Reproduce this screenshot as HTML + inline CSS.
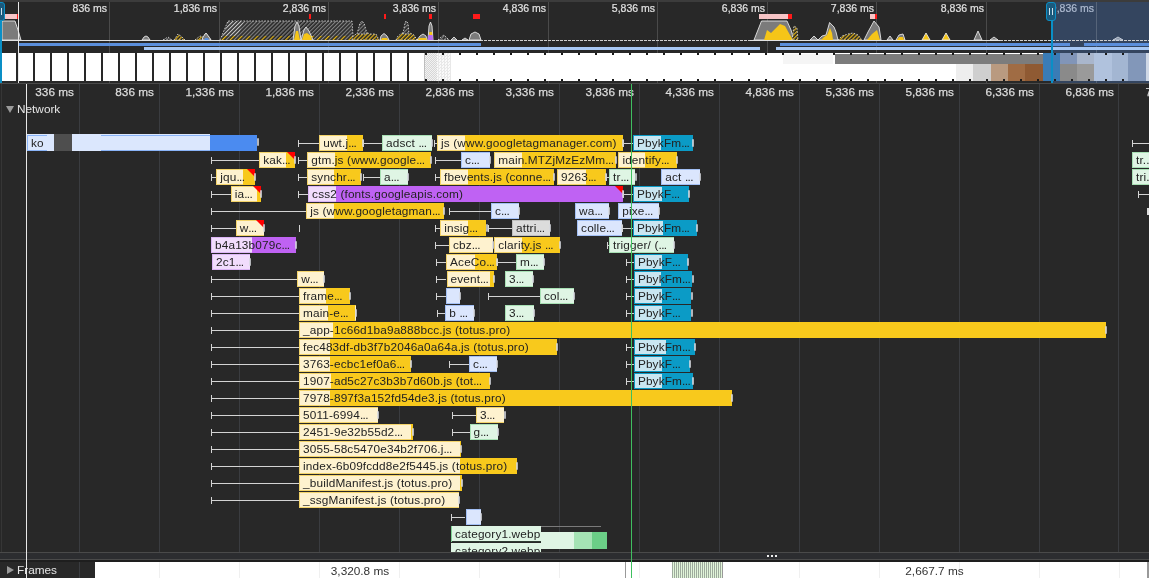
<!DOCTYPE html><html><head><meta charset="utf-8"><style>
*{margin:0;padding:0;box-sizing:border-box}
html,body{width:1149px;height:578px;overflow:hidden;background:#282828;font-family:"Liberation Sans",sans-serif}
#root{will-change:transform;position:relative;width:1149px;height:578px;overflow:hidden;background:#282828}
.abs{position:absolute}
.b{position:absolute;height:16px;overflow:hidden;white-space:nowrap}
.b span{position:absolute;left:4px;top:0;line-height:16px;font-size:11.8px;letter-spacing:0.15px;color:#222}
.dk{position:absolute;top:0;height:16px}
.el{font-style:normal;letter-spacing:-0.6px}
.red{position:absolute;right:0;top:0;width:0;height:0;border-top:8px solid #f00;border-left:8px solid transparent}
.wh{position:absolute;height:1px;background:#d4d4d4}
.wt{position:absolute;width:1px;height:7px;background:#d4d4d4}
.et{position:absolute;width:2px;height:8px;background:rgba(215,218,224,0.8);border-radius:1px}
.gl{position:absolute;width:1px;background:#3a3c40}
.rl{position:absolute;-webkit-text-stroke:0.25px #dcdcdc;font-size:11.8px;color:#dcdcdc;line-height:14px;text-align:right;width:80px}
.ol{position:absolute;-webkit-text-stroke:0.2px currentColor;font-size:10.5px;color:#e2e2e2;line-height:12px;text-align:right;width:80px}
</style></head><body><div id="root">

<div class="abs" style="left:0;top:0;width:1149px;height:2px;background:#3c3c3c"></div>
<div class="abs" style="left:1051px;top:2px;width:98px;height:81px;background:#34455f"></div>
<div class="gl" style="left:109px;top:2px;height:81px;background:#4a4a4a"></div>
<div class="ol" style="left:27px;top:2px;">836 ms</div>
<div class="gl" style="left:219px;top:2px;height:81px;background:#4a4a4a"></div>
<div class="ol" style="left:137px;top:2px;">1,836 ms</div>
<div class="gl" style="left:328px;top:2px;height:81px;background:#4a4a4a"></div>
<div class="ol" style="left:246px;top:2px;">2,836 ms</div>
<div class="gl" style="left:438px;top:2px;height:81px;background:#4a4a4a"></div>
<div class="ol" style="left:356px;top:2px;">3,836 ms</div>
<div class="gl" style="left:548px;top:2px;height:81px;background:#4a4a4a"></div>
<div class="ol" style="left:466px;top:2px;">4,836 ms</div>
<div class="gl" style="left:657px;top:2px;height:81px;background:#4a4a4a"></div>
<div class="ol" style="left:575px;top:2px;">5,836 ms</div>
<div class="gl" style="left:767px;top:2px;height:81px;background:#4a4a4a"></div>
<div class="ol" style="left:685px;top:2px;">6,836 ms</div>
<div class="gl" style="left:876px;top:2px;height:81px;background:#4a4a4a"></div>
<div class="ol" style="left:794px;top:2px;">7,836 ms</div>
<div class="gl" style="left:986px;top:2px;height:81px;background:#4a4a4a"></div>
<div class="ol" style="left:904px;top:2px;">8,836 ms</div>
<div class="gl" style="left:1096px;top:2px;height:81px;background:#566479"></div>
<div class="ol" style="left:1014px;top:2px;color:#aebbd0">9,836 ms</div>
<div class="abs" style="left:2px;top:53px;width:14px;height:28px;background:#fff"></div><div class="abs" style="left:18px;top:53px;width:15px;height:28px;background:#fff"></div><div class="abs" style="left:35px;top:53px;width:15px;height:28px;background:#fff"></div><div class="abs" style="left:52px;top:53px;width:15px;height:28px;background:#fff"></div><div class="abs" style="left:69px;top:53px;width:15px;height:28px;background:#fff"></div><div class="abs" style="left:86px;top:53px;width:15px;height:28px;background:#fff"></div><div class="abs" style="left:103px;top:53px;width:15px;height:28px;background:#fff"></div><div class="abs" style="left:120px;top:53px;width:15px;height:28px;background:#fff"></div><div class="abs" style="left:137px;top:53px;width:15px;height:28px;background:#fff"></div><div class="abs" style="left:154px;top:53px;width:15px;height:28px;background:#fff"></div><div class="abs" style="left:171px;top:53px;width:15px;height:28px;background:#fff"></div><div class="abs" style="left:188px;top:53px;width:15px;height:28px;background:#fff"></div><div class="abs" style="left:205px;top:53px;width:15px;height:28px;background:#fff"></div><div class="abs" style="left:222px;top:53px;width:15px;height:28px;background:#fff"></div><div class="abs" style="left:239px;top:53px;width:15px;height:28px;background:#fff"></div><div class="abs" style="left:256px;top:53px;width:15px;height:28px;background:#fff"></div><div class="abs" style="left:273px;top:53px;width:15px;height:28px;background:#fff"></div><div class="abs" style="left:290px;top:53px;width:15px;height:28px;background:#fff"></div><div class="abs" style="left:307px;top:53px;width:15px;height:28px;background:#fff"></div><div class="abs" style="left:324px;top:53px;width:15px;height:28px;background:#fff"></div><div class="abs" style="left:341px;top:53px;width:15px;height:28px;background:#fff"></div><div class="abs" style="left:358px;top:53px;width:15px;height:28px;background:#fff"></div><div class="abs" style="left:375px;top:53px;width:15px;height:28px;background:#fff"></div><div class="abs" style="left:392px;top:53px;width:15px;height:28px;background:#fff"></div><div class="abs" style="left:409px;top:53px;width:15px;height:28px;background:#fff"></div>
<div class="abs" style="left:424px;top:53px;width:411px;height:28px;background:#fff"></div>
<div class="abs" style="left:424px;top:53px;width:1px;height:28px;background:#bdbdbd"></div>
<div class="abs" style="left:425px;top:53px;width:12px;height:28px;background:repeating-conic-gradient(#d6d6d6 0 25%,#f2f2f2 0 50%) 0 0/2px 2px"></div>
<div class="abs" style="left:437px;top:53px;width:14px;height:28px;background:repeating-conic-gradient(#e8e8e8 0 25%,#fafafa 0 50%) 0 0/3px 3px"></div>
<div class="abs" style="left:835px;top:53px;width:314px;height:28px;background:#fff"></div>
<div class="abs" style="left:835px;top:54px;width:208px;height:10px;background:#7c7c7c"></div>
<div class="abs" style="left:783px;top:54px;width:50px;height:10px;background:#f5f5f5"></div>
<div class="abs" style="left:956px;top:64px;width:17px;height:17px;background:#eeeeee"></div>
<div class="abs" style="left:973px;top:64px;width:18px;height:17px;background:#cfcfcf"></div>
<div class="abs" style="left:991px;top:64px;width:17px;height:17px;background:#b99a80"></div>
<div class="abs" style="left:1008px;top:64px;width:17px;height:17px;background:#a06c44"></div>
<div class="abs" style="left:1025px;top:64px;width:18px;height:17px;background:#8f5a33"></div>
<div class="abs" style="left:1043px;top:53px;width:17px;height:11px;background:#3a7cb6"></div>
<div class="abs" style="left:1043px;top:64px;width:17px;height:17px;background:#3a7cb6"></div>
<div class="abs" style="left:1060px;top:53px;width:17px;height:11px;background:#8195b8"></div>
<div class="abs" style="left:1060px;top:64px;width:17px;height:17px;background:#8a8a8a"></div>
<div class="abs" style="left:1077px;top:53px;width:17px;height:11px;background:#a9b6cc"></div>
<div class="abs" style="left:1077px;top:64px;width:17px;height:17px;background:#9a9a9a"></div>
<div class="abs" style="left:1094px;top:53px;width:18px;height:11px;background:#b0c2dd"></div>
<div class="abs" style="left:1094px;top:64px;width:18px;height:17px;background:#b0c2dd"></div>
<div class="abs" style="left:1112px;top:53px;width:16px;height:11px;background:#a3b6d2"></div>
<div class="abs" style="left:1112px;top:64px;width:16px;height:17px;background:#a3b6d2"></div>
<div class="abs" style="left:1128px;top:53px;width:18px;height:11px;background:#8297b9"></div>
<div class="abs" style="left:1128px;top:64px;width:18px;height:17px;background:#8297b9"></div>
<div class="abs" style="left:1146px;top:53px;width:3px;height:11px;background:#cfd8e6"></div>
<div class="abs" style="left:1146px;top:64px;width:3px;height:17px;background:#cfd8e6"></div>
<div class="abs" style="left:425px;top:53px;width:2px;height:2px;background:#1a1a1a"></div><div class="abs" style="left:425px;top:79px;width:2px;height:2px;background:#1a1a1a"></div><div class="abs" style="left:442px;top:53px;width:2px;height:2px;background:#1a1a1a"></div><div class="abs" style="left:442px;top:79px;width:2px;height:2px;background:#1a1a1a"></div><div class="abs" style="left:459px;top:53px;width:2px;height:2px;background:#1a1a1a"></div><div class="abs" style="left:459px;top:79px;width:2px;height:2px;background:#1a1a1a"></div><div class="abs" style="left:476px;top:53px;width:2px;height:2px;background:#1a1a1a"></div><div class="abs" style="left:476px;top:79px;width:2px;height:2px;background:#1a1a1a"></div><div class="abs" style="left:493px;top:53px;width:2px;height:2px;background:#1a1a1a"></div><div class="abs" style="left:493px;top:79px;width:2px;height:2px;background:#1a1a1a"></div><div class="abs" style="left:510px;top:53px;width:2px;height:2px;background:#1a1a1a"></div><div class="abs" style="left:510px;top:79px;width:2px;height:2px;background:#1a1a1a"></div><div class="abs" style="left:527px;top:53px;width:2px;height:2px;background:#1a1a1a"></div><div class="abs" style="left:527px;top:79px;width:2px;height:2px;background:#1a1a1a"></div><div class="abs" style="left:544px;top:53px;width:2px;height:2px;background:#1a1a1a"></div><div class="abs" style="left:544px;top:79px;width:2px;height:2px;background:#1a1a1a"></div><div class="abs" style="left:561px;top:53px;width:2px;height:2px;background:#1a1a1a"></div><div class="abs" style="left:561px;top:79px;width:2px;height:2px;background:#1a1a1a"></div><div class="abs" style="left:578px;top:53px;width:2px;height:2px;background:#1a1a1a"></div><div class="abs" style="left:578px;top:79px;width:2px;height:2px;background:#1a1a1a"></div><div class="abs" style="left:595px;top:53px;width:2px;height:2px;background:#1a1a1a"></div><div class="abs" style="left:595px;top:79px;width:2px;height:2px;background:#1a1a1a"></div><div class="abs" style="left:612px;top:53px;width:2px;height:2px;background:#1a1a1a"></div><div class="abs" style="left:612px;top:79px;width:2px;height:2px;background:#1a1a1a"></div><div class="abs" style="left:629px;top:53px;width:2px;height:2px;background:#1a1a1a"></div><div class="abs" style="left:629px;top:79px;width:2px;height:2px;background:#1a1a1a"></div><div class="abs" style="left:646px;top:53px;width:2px;height:2px;background:#1a1a1a"></div><div class="abs" style="left:646px;top:79px;width:2px;height:2px;background:#1a1a1a"></div><div class="abs" style="left:663px;top:53px;width:2px;height:2px;background:#1a1a1a"></div><div class="abs" style="left:663px;top:79px;width:2px;height:2px;background:#1a1a1a"></div><div class="abs" style="left:680px;top:53px;width:2px;height:2px;background:#1a1a1a"></div><div class="abs" style="left:680px;top:79px;width:2px;height:2px;background:#1a1a1a"></div><div class="abs" style="left:697px;top:53px;width:2px;height:2px;background:#1a1a1a"></div><div class="abs" style="left:697px;top:79px;width:2px;height:2px;background:#1a1a1a"></div><div class="abs" style="left:714px;top:53px;width:2px;height:2px;background:#1a1a1a"></div><div class="abs" style="left:714px;top:79px;width:2px;height:2px;background:#1a1a1a"></div><div class="abs" style="left:731px;top:53px;width:2px;height:2px;background:#1a1a1a"></div><div class="abs" style="left:731px;top:79px;width:2px;height:2px;background:#1a1a1a"></div><div class="abs" style="left:748px;top:53px;width:2px;height:2px;background:#1a1a1a"></div><div class="abs" style="left:748px;top:79px;width:2px;height:2px;background:#1a1a1a"></div><div class="abs" style="left:765px;top:53px;width:2px;height:2px;background:#1a1a1a"></div><div class="abs" style="left:765px;top:79px;width:2px;height:2px;background:#1a1a1a"></div><div class="abs" style="left:782px;top:53px;width:2px;height:2px;background:#1a1a1a"></div><div class="abs" style="left:782px;top:79px;width:2px;height:2px;background:#1a1a1a"></div><div class="abs" style="left:799px;top:53px;width:2px;height:2px;background:#1a1a1a"></div><div class="abs" style="left:799px;top:79px;width:2px;height:2px;background:#1a1a1a"></div><div class="abs" style="left:816px;top:53px;width:2px;height:2px;background:#1a1a1a"></div><div class="abs" style="left:816px;top:79px;width:2px;height:2px;background:#1a1a1a"></div><div class="abs" style="left:833px;top:53px;width:2px;height:2px;background:#1a1a1a"></div><div class="abs" style="left:833px;top:79px;width:2px;height:2px;background:#1a1a1a"></div><div class="abs" style="left:850px;top:53px;width:2px;height:2px;background:#1a1a1a"></div><div class="abs" style="left:850px;top:79px;width:2px;height:2px;background:#1a1a1a"></div><div class="abs" style="left:867px;top:53px;width:2px;height:2px;background:#1a1a1a"></div><div class="abs" style="left:867px;top:79px;width:2px;height:2px;background:#1a1a1a"></div><div class="abs" style="left:884px;top:53px;width:2px;height:2px;background:#1a1a1a"></div><div class="abs" style="left:884px;top:79px;width:2px;height:2px;background:#1a1a1a"></div><div class="abs" style="left:901px;top:53px;width:2px;height:2px;background:#1a1a1a"></div><div class="abs" style="left:901px;top:79px;width:2px;height:2px;background:#1a1a1a"></div><div class="abs" style="left:918px;top:53px;width:2px;height:2px;background:#1a1a1a"></div><div class="abs" style="left:918px;top:79px;width:2px;height:2px;background:#1a1a1a"></div><div class="abs" style="left:935px;top:53px;width:2px;height:2px;background:#1a1a1a"></div><div class="abs" style="left:935px;top:79px;width:2px;height:2px;background:#1a1a1a"></div><div class="abs" style="left:952px;top:53px;width:2px;height:2px;background:#1a1a1a"></div><div class="abs" style="left:952px;top:79px;width:2px;height:2px;background:#1a1a1a"></div><div class="abs" style="left:969px;top:53px;width:2px;height:2px;background:#1a1a1a"></div><div class="abs" style="left:969px;top:79px;width:2px;height:2px;background:#1a1a1a"></div><div class="abs" style="left:986px;top:53px;width:2px;height:2px;background:#1a1a1a"></div><div class="abs" style="left:986px;top:79px;width:2px;height:2px;background:#1a1a1a"></div><div class="abs" style="left:1003px;top:53px;width:2px;height:2px;background:#1a1a1a"></div><div class="abs" style="left:1003px;top:79px;width:2px;height:2px;background:#1a1a1a"></div><div class="abs" style="left:1020px;top:53px;width:2px;height:2px;background:#1a1a1a"></div><div class="abs" style="left:1020px;top:79px;width:2px;height:2px;background:#1a1a1a"></div><div class="abs" style="left:1037px;top:53px;width:2px;height:2px;background:#1a1a1a"></div><div class="abs" style="left:1037px;top:79px;width:2px;height:2px;background:#1a1a1a"></div><div class="abs" style="left:1054px;top:53px;width:2px;height:2px;background:#1a1a1a"></div><div class="abs" style="left:1054px;top:79px;width:2px;height:2px;background:#1a1a1a"></div><div class="abs" style="left:1071px;top:53px;width:2px;height:2px;background:#1a1a1a"></div><div class="abs" style="left:1071px;top:79px;width:2px;height:2px;background:#1a1a1a"></div><div class="abs" style="left:1088px;top:53px;width:2px;height:2px;background:#1a1a1a"></div><div class="abs" style="left:1088px;top:79px;width:2px;height:2px;background:#1a1a1a"></div><div class="abs" style="left:1105px;top:53px;width:2px;height:2px;background:#1a1a1a"></div><div class="abs" style="left:1105px;top:79px;width:2px;height:2px;background:#1a1a1a"></div><div class="abs" style="left:1122px;top:53px;width:2px;height:2px;background:#1a1a1a"></div><div class="abs" style="left:1122px;top:79px;width:2px;height:2px;background:#1a1a1a"></div>
<div class="abs" style="left:19px;top:43px;width:462px;height:3px;background:#5b8fdc"></div>
<div class="abs" style="left:780px;top:43px;width:290px;height:3px;background:#5b8fdc"></div>
<div class="abs" style="left:1084px;top:43px;width:65px;height:3px;background:#5b8fdc"></div>
<div class="abs" style="left:144px;top:47px;width:616px;height:3px;background:#a8c8f4"></div>
<div class="abs" style="left:776px;top:47px;width:373px;height:3px;background:#a8c8f4"></div>
<svg class="abs" style="left:0;top:0" width="1149" height="52">
<defs><pattern id="hp" patternUnits="userSpaceOnUse" width="2.8" height="2.8" patternTransform="rotate(45)">
<rect width="2.8" height="2.8" fill="#262626"/><rect width="1.2" height="2.8" fill="#808080"/></pattern>
<pattern id="hy" patternUnits="userSpaceOnUse" width="2.8" height="2.8" patternTransform="rotate(45)">
<rect width="2.8" height="2.8" fill="#262626"/><rect width="1.2" height="2.8" fill="#e8b818"/></pattern>
<pattern id="hy2" patternUnits="userSpaceOnUse" width="5.6" height="5.6" patternTransform="rotate(45)">
<rect width="5.6" height="5.6" fill="#262626"/><rect width="1.2" height="5.6" fill="#e8b818"/><rect x="2.8" width="1.2" height="5.6" fill="#8a8a8a"/></pattern>
<pattern id="hw" patternUnits="userSpaceOnUse" width="2.8" height="2.8" patternTransform="rotate(45)">
<rect width="2.8" height="2.8" fill="#262626"/><rect width="1.2" height="2.8" fill="#c4c4c4"/></pattern></defs>
<line x1="0" y1="40.5" x2="1149" y2="40.5" stroke="#d0d0d0" stroke-width="1" stroke-dasharray="3,1"/><line x1="0" y1="40.5" x2="481" y2="40.5" stroke="#e0e0e0" stroke-width="1"/><line x1="750" y1="40.5" x2="1000" y2="40.5" stroke="#e0e0e0" stroke-width="1"/>
<polygon points="2,40 2,21 15,21 18,30 21,40" fill="#7b7b7b" stroke="#e6e6e6" stroke-width="0.9"/><polygon points="142,40 144,37 146,36 148,37 150,40" fill="#7b7b7b" stroke="#e6e6e6" stroke-width="0.9"/><polygon points="163,40 168,37 172,40" fill="url(#hp)" stroke="#d8d8d8" stroke-dasharray="1.5,1.5" stroke-width="0.9"/><polygon points="174,40 178,34 182,37 185,40" fill="url(#hy)" stroke="#d8d8d8" stroke-dasharray="1.5,1.5" stroke-width="0.9"/><polygon points="195,40 200,36 203,37 206,33 209,37 211,40" fill="url(#hy)" stroke="#d8d8d8" stroke-dasharray="1.5,1.5" stroke-width="0.9"/><polygon points="202,40 203,37 206,33 209,37 211,40" fill="#7b7b7b" stroke="#e6e6e6" stroke-width="0.9"/><polygon points="204,40 205,38 208,38 209,40" fill="#5b8fdc" stroke="none" stroke-width="0.9"/><polygon points="220,40 228,21 352,21 353,36 353,40" fill="url(#hp)" stroke="#d8d8d8" stroke-dasharray="1.5,1.5" stroke-width="0.9"/><polygon points="221,40 229,21 244,21 236,40" fill="url(#hw)" stroke="none" stroke-width="0.9"/><polygon points="221,40 223,36 352,36 353,40" fill="url(#hy2)" stroke="none" stroke-width="0.9"/><polygon points="293,40 295,26 297,22 299,26 301,40" fill="#7b7b7b" stroke="#e6e6e6" stroke-width="0.9"/><polygon points="294,40 296,31 298,31 300,40" fill="#f5c518" stroke="none" stroke-width="0.9"/><polygon points="301,40 304,30 306,27 309,31 313,40" fill="#7b7b7b" stroke="#e6e6e6" stroke-width="0.9"/><polygon points="302,40 304,34 307,33 311,36 312,40" fill="#f5c518" stroke="none" stroke-width="0.9"/><polygon points="352,40 353,36 358,33 362,30 366,32 370,34 376,34 379,40" fill="url(#hy)" stroke="#d8d8d8" stroke-dasharray="1.5,1.5" stroke-width="0.9"/><polygon points="357,34 360,23 362,21 364,23 366,30 367,34" fill="url(#hp)" stroke="#d8d8d8" stroke-dasharray="1.5,1.5" stroke-width="0.9"/><polygon points="380,40 381,36 384,33.5 387,36 389,40" fill="#7b7b7b" stroke="#e6e6e6" stroke-width="0.9"/><polygon points="381,40 382,38 387,38 388,40" fill="#f5c518" stroke="none" stroke-width="0.9"/><polygon points="396,40 398,36 402,33 410,33 414,35 417,40" fill="url(#hy)" stroke="#d8d8d8" stroke-dasharray="1.5,1.5" stroke-width="0.9"/><polygon points="403,34 405,23 406,21 408,23 409,34" fill="url(#hp)" stroke="#d8d8d8" stroke-dasharray="1.5,1.5" stroke-width="0.9"/><polygon points="417,40 420,36 423,34 426,36 427,40" fill="#7b7b7b" stroke="#e6e6e6" stroke-width="0.9"/><polygon points="418,40 419,38 426,38 427,40" fill="#f5c518" stroke="none" stroke-width="0.9"/><polygon points="428,40 429,26 430.5,22 432,26 433,40" fill="#7b7b7b" stroke="#e6e6e6" stroke-width="0.9"/><polygon points="428,40 428.5,35 432.5,35 433,40" fill="#b86cf2" stroke="none" stroke-width="0.9"/><polygon points="429,35 429.3,32 432,32 432.3,35" fill="#f5c518" stroke="none" stroke-width="0.9"/><polygon points="438,40 441,37 444,35 447,38 449,40" fill="url(#hp)" stroke="#d8d8d8" stroke-dasharray="1.5,1.5" stroke-width="0.9"/><polygon points="451,40 454,37 457,40" fill="#7b7b7b" stroke="#e6e6e6" stroke-width="0.9"/><polygon points="462,40 465,38 468,40" fill="#7b7b7b" stroke="#e6e6e6" stroke-width="0.9"/><polygon points="469,40 471,34 475,32 479,34 481,40" fill="#7b7b7b" stroke="#e6e6e6" stroke-width="0.9"/><polygon points="754,40 761.5,21 787,21 791,30 794,40" fill="#7b7b7b" stroke="#e6e6e6" stroke-width="0.9"/><polygon points="764,40 767,30 771,33 780,24 785,26 790,35 793,40" fill="#f5c518" stroke="none" stroke-width="0.9"/><polygon points="792,40 794,26 797,28 798,40" fill="url(#hy)" stroke="#d8d8d8" stroke-dasharray="1.5,1.5" stroke-width="0.9"/><polygon points="810,40 814,36 818,40" fill="#7b7b7b" stroke="#e6e6e6" stroke-width="0.9"/><polygon points="818,40 822,36 826,35 829.6,22.5 834,27 836,32 838,40" fill="#7b7b7b" stroke="#e6e6e6" stroke-width="0.9"/><polygon points="821,40 824,37 827,35 830,28 832,33 833,40" fill="#f5c518" stroke="none" stroke-width="0.9"/><polygon points="838,40 842,36 848,34 853,33 858,35 862,40" fill="url(#hy)" stroke="#d8d8d8" stroke-dasharray="1.5,1.5" stroke-width="0.9"/><polygon points="864,40 868,32 874,21 879,27 880,33 881,40" fill="#7b7b7b" stroke="#e6e6e6" stroke-width="0.9"/><polygon points="867,40 872,34 877,30 880,40" fill="#f5c518" stroke="none" stroke-width="0.9"/><polygon points="887,40 890,36 893,40" fill="#7b7b7b" stroke="#e6e6e6" stroke-width="0.9"/><polygon points="896,40 899,35 903,34 905,40" fill="#7b7b7b" stroke="#e6e6e6" stroke-width="0.9"/><polygon points="897,40 899,37 903,37 904,40" fill="#f5c518" stroke="none" stroke-width="0.9"/><polygon points="922,40 926,33 930,40" fill="#f5c518" stroke="#e6e6e6" stroke-width="0.9"/><polygon points="942,40 946,33 950,40" fill="#f5c518" stroke="#e6e6e6" stroke-width="0.9"/><polygon points="974,40 978,31 982,40" fill="#7b7b7b" stroke="#e6e6e6" stroke-width="0.9"/><polygon points="990,40 994,37 998,40" fill="#7b7b7b" stroke="#e6e6e6" stroke-width="0.9"/><polygon points="1113,40 1118,37 1123,40" fill="#8a97aa" stroke="#c8d0dc" stroke-width="0.9"/></svg>
<div class="abs" style="left:5px;top:14px;width:12px;height:5px;background:#f7c5c7"></div>
<div class="abs" style="left:17px;top:14px;width:2px;height:5px;background:#ff1a1a"></div>
<div class="abs" style="left:309px;top:14px;width:2px;height:5px;background:#ff1a1a"></div>
<div class="abs" style="left:384px;top:14px;width:2px;height:5px;background:#ff1a1a"></div>
<div class="abs" style="left:429px;top:14px;width:3px;height:5px;background:#ff1a1a"></div>
<div class="abs" style="left:473px;top:14px;width:7px;height:5px;background:#ff1a1a"></div>
<div class="abs" style="left:759px;top:14px;width:29px;height:5px;background:#f7c5c7"></div>
<div class="abs" style="left:788px;top:14px;width:4px;height:5px;background:#ff1a1a"></div>
<div class="abs" style="left:870px;top:14px;width:5px;height:5px;background:#f7c5c7"></div>
<div class="abs" style="left:875px;top:14px;width:2px;height:5px;background:#ff1a1a"></div>
<div class="abs" style="left:18px;top:2px;width:1px;height:81px;background:#e8e8e8"></div>
<div class="abs" style="left:0;top:20px;width:2px;height:63px;background:#0a8fc6"></div>
<div class="abs" style="left:-5px;top:2px;width:10px;height:19px;background:#1b5a7d;border:1px solid #0a8fc6;border-radius:3px"></div>
<div class="abs" style="left:1px;top:8px;width:1px;height:7px;background:#cfe3ee"></div>
<div class="abs" style="left:1051px;top:20px;width:2px;height:63px;background:#0a8fc6"></div>
<div class="abs" style="left:1046px;top:2px;width:10px;height:19px;background:#1b5a7d;border:1px solid #0a8fc6;border-radius:3px"></div>
<div class="abs" style="left:1049px;top:8px;width:1px;height:7px;background:#cfe3ee"></div>
<div class="abs" style="left:1052px;top:8px;width:1px;height:7px;background:#cfe3ee"></div>
<div class="abs" style="left:0;top:83px;width:1149px;height:1px;background:#4a4a4a"></div>
<div class="gl" style="left:79px;top:84px;height:468px"></div>
<div class="gl" style="left:79px;top:562px;height:16px"></div>
<div class="rl" style="left:-6px;top:85px">336 ms</div>
<div class="gl" style="left:159px;top:84px;height:468px"></div>
<div class="gl" style="left:159px;top:562px;height:16px"></div>
<div class="rl" style="left:74px;top:85px">836 ms</div>
<div class="gl" style="left:239px;top:84px;height:468px"></div>
<div class="gl" style="left:239px;top:562px;height:16px"></div>
<div class="rl" style="left:154px;top:85px">1,336 ms</div>
<div class="gl" style="left:319px;top:84px;height:468px"></div>
<div class="gl" style="left:319px;top:562px;height:16px"></div>
<div class="rl" style="left:234px;top:85px">1,836 ms</div>
<div class="gl" style="left:399px;top:84px;height:468px"></div>
<div class="gl" style="left:399px;top:562px;height:16px"></div>
<div class="rl" style="left:314px;top:85px">2,336 ms</div>
<div class="gl" style="left:479px;top:84px;height:468px"></div>
<div class="gl" style="left:479px;top:562px;height:16px"></div>
<div class="rl" style="left:394px;top:85px">2,836 ms</div>
<div class="gl" style="left:559px;top:84px;height:468px"></div>
<div class="gl" style="left:559px;top:562px;height:16px"></div>
<div class="rl" style="left:474px;top:85px">3,336 ms</div>
<div class="gl" style="left:639px;top:84px;height:468px"></div>
<div class="gl" style="left:639px;top:562px;height:16px"></div>
<div class="rl" style="left:554px;top:85px">3,836 ms</div>
<div class="gl" style="left:719px;top:84px;height:468px"></div>
<div class="gl" style="left:719px;top:562px;height:16px"></div>
<div class="rl" style="left:634px;top:85px">4,336 ms</div>
<div class="gl" style="left:799px;top:84px;height:468px"></div>
<div class="gl" style="left:799px;top:562px;height:16px"></div>
<div class="rl" style="left:714px;top:85px">4,836 ms</div>
<div class="gl" style="left:879px;top:84px;height:468px"></div>
<div class="gl" style="left:879px;top:562px;height:16px"></div>
<div class="rl" style="left:794px;top:85px">5,336 ms</div>
<div class="gl" style="left:959px;top:84px;height:468px"></div>
<div class="gl" style="left:959px;top:562px;height:16px"></div>
<div class="rl" style="left:874px;top:85px">5,836 ms</div>
<div class="gl" style="left:1039px;top:84px;height:468px"></div>
<div class="gl" style="left:1039px;top:562px;height:16px"></div>
<div class="rl" style="left:954px;top:85px">6,336 ms</div>
<div class="gl" style="left:1118px;top:84px;height:468px"></div>
<div class="gl" style="left:1118px;top:562px;height:16px"></div>
<div class="rl" style="left:1034px;top:85px">6,836 ms</div>
<div class="gl" style="left:1199px;top:84px;height:468px"></div>
<div class="gl" style="left:1199px;top:562px;height:16px"></div>
<div class="rl" style="left:1114px;top:85px">7,336 ms</div>
<div class="abs" style="left:6px;top:106px;width:0;height:0;border-left:4px solid transparent;border-right:4px solid transparent;border-top:7px solid #9a9a9a"></div>
<div class="abs" style="left:17px;top:102px;font-size:11.8px;line-height:14px;color:#e6e6e6">Network</div>
<div class="abs" style="left:27px;top:134px;width:183px;height:17px;background:#dbe7fd"></div>
<div class="abs" style="left:27px;top:135px;width:20px;height:1px;background:#8ab4f8"></div>
<div class="abs" style="left:27px;top:150px;width:20px;height:1px;background:#8ab4f8"></div>
<div class="abs" style="left:27px;top:135px;width:1px;height:16px;background:#8ab4f8"></div>
<div class="abs" style="left:101px;top:135px;width:109px;height:1px;background:#8ab4f8"></div>
<div class="abs" style="left:101px;top:150px;width:109px;height:1px;background:#8ab4f8"></div>
<div class="abs" style="left:54px;top:134px;width:18px;height:17px;background:#4e4e4e"></div>
<div class="abs" style="left:210px;top:135px;width:47px;height:16px;background:#4b8bf0"></div>
<div class="b" style="left:27px;top:135px;width:27px"><span>ko</span></div>
<div class="et" style="left:257px;top:138px"></div>
<div class="wh" style="left:298.4px;top:143px;width:20.8px"></div>
<div class="wt" style="left:298.4px;top:140px"></div>
<div class="b" style="left:319.2px;top:135px;width:43.4px;background:#fef2cf;box-shadow:inset 1px 1px 0 #f3d36a,inset 0 -1px 0 #f3d36a">
<div class="dk" style="left:27.8px;width:15.6px;background:#f8c91c"></div>
<span>uwt.j<i class="el">...</i></span>
</div>
<div class="et" style="left:361.6px;top:139px"></div>
<div class="wh" style="left:363.0px;top:143px;width:19.0px"></div>
<div class="wt" style="left:363.0px;top:140px"></div>
<div class="b" style="left:382.0px;top:135px;width:49.5px;background:#dff5e4;box-shadow:inset 1px 1px 0 #a8e0b4,inset 0 -1px 0 #a8e0b4">
<span>adsct <i class="el">...</i></span>
</div>
<div class="et" style="left:430.5px;top:139px"></div>
<div class="wh" style="left:433.6px;top:143px;width:3.4px"></div>
<div class="wt" style="left:433.6px;top:140px"></div>
<div class="b" style="left:437.0px;top:135px;width:185.6px;background:#fef2cf;box-shadow:inset 1px 1px 0 #f3d36a,inset 0 -1px 0 #f3d36a">
<div class="dk" style="left:28.0px;width:157.6px;background:#f8c91c"></div>
<span>js (www.googletagmanager.com)</span>
</div>
<div class="et" style="left:621.6px;top:139px"></div>
<div class="wh" style="left:623.0px;top:143px;width:10.1px"></div>
<div class="wt" style="left:623.0px;top:140px"></div>
<div class="b" style="left:633.1px;top:135px;width:59.8px;background:#c9e6f1;box-shadow:inset 1px 1px 0 #0b9bc6,inset 0 -1px 0 #0b9bc6">
<div class="dk" style="left:27.8px;width:32.0px;background:#0b9bc6"></div>
<span>PbykFm<i class="el">...</i></span>
</div>
<div class="et" style="left:691.9px;top:139px"></div>
<div class="wh" style="left:1132px;top:143px;width:17px"></div><div class="wt" style="left:1132px;top:140px"></div>
<div class="wh" style="left:210.5px;top:160px;width:48.7px"></div>
<div class="wt" style="left:210.5px;top:157px"></div>
<div class="b" style="left:259.2px;top:152px;width:36.2px;background:#fef2cf;box-shadow:inset 1px 1px 0 #f3d36a,inset 0 -1px 0 #f3d36a">
<div class="dk" style="left:26.8px;width:9.4px;background:#f8c91c"></div>
<div class="red"></div>
<span>kak<i class="el">...</i></span>
</div>
<div class="et" style="left:294.4px;top:156px"></div>
<div class="wh" style="left:298.4px;top:160px;width:8.9px"></div>
<div class="wt" style="left:298.4px;top:157px"></div>
<div class="b" style="left:307.3px;top:152px;width:123.9px;background:#fef2cf;box-shadow:inset 1px 1px 0 #f3d36a,inset 0 -1px 0 #f3d36a">
<div class="dk" style="left:27.7px;width:96.2px;background:#f8c91c"></div>
<span>gtm.js (www.google<i class="el">...</i></span>
</div>
<div class="et" style="left:430.2px;top:156px"></div>
<div class="wh" style="left:435.0px;top:160px;width:26.0px"></div>
<div class="wt" style="left:435.0px;top:157px"></div>
<div class="b" style="left:461.0px;top:152px;width:28.7px;background:#dbe6fd;box-shadow:inset 1px 1px 0 #a3c0f5,inset 0 -1px 0 #a3c0f5">
<span>c<i class="el">...</i></span>
</div>
<div class="et" style="left:488.7px;top:156px"></div>
<div class="b" style="left:494.2px;top:152px;width:121.4px;background:#fef2cf;box-shadow:inset 1px 1px 0 #f3d36a,inset 0 -1px 0 #f3d36a">
<div class="dk" style="left:27.8px;width:93.6px;background:#f8c91c"></div>
<span>main.MTZjMzEzMm<i class="el">...</i></span>
</div>
<div class="et" style="left:614.6px;top:156px"></div>
<div class="b" style="left:618.4px;top:152px;width:58.9px;background:#fef2cf;box-shadow:inset 1px 1px 0 #f3d36a,inset 0 -1px 0 #f3d36a">
<div class="dk" style="left:26.9px;width:32.0px;background:#f8c91c"></div>
<span>identify<i class="el">...</i></span>
</div>
<div class="et" style="left:676.3px;top:156px"></div>
<div class="b" style="left:1132.0px;top:152px;width:20.0px;background:#dff5e4;box-shadow:inset 1px 1px 0 #a8e0b4,inset 0 -1px 0 #a8e0b4">
<span>tr..</span>
</div>
<div class="et" style="left:1151.0px;top:156px"></div>
<div class="wh" style="left:210.5px;top:177px;width:5.7px"></div>
<div class="wt" style="left:210.5px;top:174px"></div>
<div class="b" style="left:216.2px;top:169px;width:39.0px;background:#fef2cf;box-shadow:inset 1px 1px 0 #f3d36a,inset 0 -1px 0 #f3d36a">
<div class="dk" style="left:26.8px;width:12.2px;background:#f8c91c"></div>
<div class="red"></div>
<span>jqu<i class="el">...</i></span>
</div>
<div class="et" style="left:254.2px;top:173px"></div>
<div class="wh" style="left:298.4px;top:177px;width:8.9px"></div>
<div class="wt" style="left:298.4px;top:174px"></div>
<div class="b" style="left:307.3px;top:169px;width:53.3px;background:#fef2cf;box-shadow:inset 1px 1px 0 #f3d36a,inset 0 -1px 0 #f3d36a">
<div class="dk" style="left:26.7px;width:26.6px;background:#f8c91c"></div>
<span>synchr<i class="el">...</i></span>
</div>
<div class="et" style="left:359.6px;top:173px"></div>
<div class="wh" style="left:363.0px;top:177px;width:17.1px"></div>
<div class="wt" style="left:363.0px;top:174px"></div>
<div class="b" style="left:380.1px;top:169px;width:27.7px;background:#dff5e4;box-shadow:inset 1px 1px 0 #a8e0b4,inset 0 -1px 0 #a8e0b4">
<span>a<i class="el">...</i></span>
</div>
<div class="et" style="left:406.8px;top:173px"></div>
<div class="wh" style="left:435.1px;top:177px;width:4.9px"></div>
<div class="wt" style="left:435.1px;top:174px"></div>
<div class="b" style="left:440.0px;top:169px;width:114.3px;background:#fef2cf;box-shadow:inset 1px 1px 0 #f3d36a,inset 0 -1px 0 #f3d36a">
<div class="dk" style="left:28.1px;width:86.2px;background:#f8c91c"></div>
<span>fbevents.js (conne<i class="el">...</i></span>
</div>
<div class="et" style="left:553.3px;top:173px"></div>
<div class="b" style="left:557.1px;top:169px;width:48.5px;background:#fef2cf;box-shadow:inset 1px 1px 0 #f3d36a,inset 0 -1px 0 #f3d36a">
<div class="dk" style="left:28.7px;width:19.8px;background:#f8c91c"></div>
<span>9263<i class="el">...</i></span>
</div>
<div class="et" style="left:604.6px;top:173px"></div>
<div class="wh" style="left:606.0px;top:177px;width:3.1px"></div>
<div class="wt" style="left:606.0px;top:174px"></div>
<div class="b" style="left:609.1px;top:169px;width:26.4px;background:#dff5e4;box-shadow:inset 1px 1px 0 #a8e0b4,inset 0 -1px 0 #a8e0b4">
<span>tr<i class="el">...</i></span>
</div>
<div class="et" style="left:634.5px;top:173px"></div>
<div class="b" style="left:661.3px;top:169px;width:38.3px;background:#dbe6fd;box-shadow:inset 1px 1px 0 #a3c0f5,inset 0 -1px 0 #a3c0f5">
<span>act <i class="el">...</i></span>
</div>
<div class="et" style="left:698.6px;top:173px"></div>
<div class="b" style="left:1132.0px;top:169px;width:20.0px;background:#dff5e4;box-shadow:inset 1px 1px 0 #a8e0b4,inset 0 -1px 0 #a8e0b4">
<span>tri..</span>
</div>
<div class="et" style="left:1151.0px;top:173px"></div>
<div class="wh" style="left:210.5px;top:194px;width:20.2px"></div>
<div class="wt" style="left:210.5px;top:191px"></div>
<div class="b" style="left:230.7px;top:186px;width:30.6px;background:#fef2cf;box-shadow:inset 1px 1px 0 #f3d36a,inset 0 -1px 0 #f3d36a">
<div class="dk" style="left:26.8px;width:3.8px;background:#f8c91c"></div>
<div class="red"></div>
<span>ia<i class="el">...</i></span>
</div>
<div class="et" style="left:260.3px;top:190px"></div>
<div class="wh" style="left:298.4px;top:194px;width:9.7px"></div>
<div class="wt" style="left:298.4px;top:191px"></div>
<div class="b" style="left:308.1px;top:186px;width:314.9px;background:#f1dcfc;box-shadow:inset 1px 1px 0 #dcb5f5,inset 0 -1px 0 #dcb5f5">
<div class="dk" style="left:27.9px;width:287.0px;background:#bf62f3"></div>
<div class="red"></div>
<span>css2 (fonts.googleapis.com)</span>
</div>
<div class="et" style="left:622.0px;top:190px"></div>
<div class="wh" style="left:623.0px;top:194px;width:10.1px"></div>
<div class="wt" style="left:623.0px;top:191px"></div>
<div class="b" style="left:633.1px;top:186px;width:55.6px;background:#c9e6f1;box-shadow:inset 1px 1px 0 #0b9bc6,inset 0 -1px 0 #0b9bc6">
<div class="dk" style="left:28.9px;width:26.7px;background:#0b9bc6"></div>
<span>PbykF<i class="el">...</i></span>
</div>
<div class="et" style="left:687.7px;top:190px"></div>
<div class="wh" style="left:1138px;top:194px;width:11px"></div><div class="wt" style="left:1138px;top:191px"></div>
<div class="wh" style="left:210.5px;top:211px;width:95.8px"></div>
<div class="wt" style="left:210.5px;top:208px"></div>
<div class="b" style="left:306.3px;top:203px;width:137.5px;background:#fef2cf;box-shadow:inset 1px 1px 0 #f3d36a,inset 0 -1px 0 #f3d36a">
<div class="dk" style="left:27.7px;width:109.8px;background:#f8c91c"></div>
<span>js (www.googletagman<i class="el">...</i></span>
</div>
<div class="et" style="left:442.8px;top:207px"></div>
<div class="wh" style="left:449.3px;top:211px;width:41.7px"></div>
<div class="wt" style="left:449.3px;top:208px"></div>
<div class="b" style="left:491.0px;top:203px;width:27.7px;background:#dbe6fd;box-shadow:inset 1px 1px 0 #a3c0f5,inset 0 -1px 0 #a3c0f5">
<span>c<i class="el">...</i></span>
</div>
<div class="et" style="left:517.7px;top:207px"></div>
<div class="b" style="left:575.1px;top:203px;width:34.0px;background:#dbe6fd;box-shadow:inset 1px 1px 0 #a3c0f5,inset 0 -1px 0 #a3c0f5">
<span>wa<i class="el">...</i></span>
</div>
<div class="et" style="left:608.1px;top:207px"></div>
<div class="b" style="left:618.3px;top:203px;width:40.9px;background:#dbe6fd;box-shadow:inset 1px 1px 0 #a3c0f5,inset 0 -1px 0 #a3c0f5">
<span>pixe<i class="el">...</i></span>
</div>
<div class="et" style="left:658.2px;top:207px"></div>
<div class="abs" style="left:1147px;top:208px;width:2px;height:7px;background:#ddd"></div>
<div class="wh" style="left:210.5px;top:228px;width:25.2px"></div>
<div class="wt" style="left:210.5px;top:225px"></div>
<div class="b" style="left:235.7px;top:220px;width:28.5px;background:#fef2cf;box-shadow:inset 1px 1px 0 #f3d36a,inset 0 -1px 0 #f3d36a">
<div class="red"></div>
<span>w<i class="el">...</i></span>
</div>
<div class="et" style="left:263.2px;top:224px"></div>
<div class="wt" style="left:298.6px;top:225px"></div>
<div class="wh" style="left:435.4px;top:228px;width:4.9px"></div>
<div class="wt" style="left:435.4px;top:225px"></div>
<div class="b" style="left:440.3px;top:220px;width:46.2px;background:#fef2cf;box-shadow:inset 1px 1px 0 #f3d36a,inset 0 -1px 0 #f3d36a">
<div class="dk" style="left:27.8px;width:18.4px;background:#f8c91c"></div>
<span>insig<i class="el">...</i></span>
</div>
<div class="et" style="left:485.5px;top:224px"></div>
<div class="wh" style="left:487.7px;top:228px;width:24.3px"></div>
<div class="wt" style="left:487.7px;top:225px"></div>
<div class="b" style="left:512.0px;top:220px;width:38.0px;background:#dcdcdc;box-shadow:inset 1px 1px 0 #c0c0c0,inset 0 -1px 0 #c0c0c0">
<span>attri<i class="el">...</i></span>
</div>
<div class="et" style="left:549.0px;top:224px"></div>
<div class="b" style="left:577.1px;top:220px;width:44.8px;background:#dbe6fd;box-shadow:inset 1px 1px 0 #a3c0f5,inset 0 -1px 0 #a3c0f5">
<span>colle<i class="el">...</i></span>
</div>
<div class="et" style="left:620.9px;top:224px"></div>
<div class="wh" style="left:622.0px;top:228px;width:11.1px"></div>
<div class="wt" style="left:622.0px;top:225px"></div>
<div class="b" style="left:633.1px;top:220px;width:64.1px;background:#c9e6f1;box-shadow:inset 1px 1px 0 #0b9bc6,inset 0 -1px 0 #0b9bc6">
<div class="dk" style="left:29.9px;width:34.2px;background:#0b9bc6"></div>
<span>PbykFm<i class="el">...</i></span>
</div>
<div class="et" style="left:696.2px;top:224px"></div>
<div class="b" style="left:211.0px;top:237px;width:84.8px;background:#f1dcfc;box-shadow:inset 1px 1px 0 #dcb5f5,inset 0 -1px 0 #dcb5f5">
<div class="dk" style="left:41.3px;width:43.5px;background:#bf62f3"></div>
<span>b4a13b079c<i class="el">...</i></span>
</div>
<div class="et" style="left:294.8px;top:241px"></div>
<div class="wh" style="left:435.4px;top:245px;width:13.6px"></div>
<div class="wt" style="left:435.4px;top:242px"></div>
<div class="b" style="left:449.0px;top:237px;width:44.2px;background:#fef2cf;box-shadow:inset 1px 1px 0 #f3d36a,inset 0 -1px 0 #f3d36a">
<span>cbz<i class="el">...</i></span>
</div>
<div class="et" style="left:492.2px;top:241px"></div>
<div class="b" style="left:494.3px;top:237px;width:65.4px;background:#fef2cf;box-shadow:inset 1px 1px 0 #f3d36a,inset 0 -1px 0 #f3d36a">
<div class="dk" style="left:28.2px;width:37.2px;background:#f8c91c"></div>
<span>clarity.js <i class="el">...</i></span>
</div>
<div class="et" style="left:558.7px;top:241px"></div>
<div class="wh" style="left:607.4px;top:245px;width:1.7px"></div>
<div class="wt" style="left:607.4px;top:242px"></div>
<div class="b" style="left:609.1px;top:237px;width:64.7px;background:#dff5e4;box-shadow:inset 1px 1px 0 #a8e0b4,inset 0 -1px 0 #a8e0b4">
<span>trigger/ (<i class="el">...</i></span>
</div>
<div class="et" style="left:672.8px;top:241px"></div>
<div class="b" style="left:212.0px;top:254px;width:38.2px;background:#f1dcfc;box-shadow:inset 1px 1px 0 #dcb5f5,inset 0 -1px 0 #dcb5f5">
<span>2c1<i class="el">...</i></span>
</div>
<div class="et" style="left:249.2px;top:258px"></div>
<div class="wh" style="left:436.0px;top:262px;width:10.1px"></div>
<div class="wt" style="left:436.0px;top:259px"></div>
<div class="b" style="left:446.1px;top:254px;width:50.6px;background:#fef2cf;box-shadow:inset 1px 1px 0 #f3d36a,inset 0 -1px 0 #f3d36a">
<div class="dk" style="left:28.7px;width:21.9px;background:#f8c91c"></div>
<span>AceCo<i class="el">...</i></span>
</div>
<div class="et" style="left:495.7px;top:258px"></div>
<div class="wh" style="left:497.0px;top:262px;width:19.0px"></div>
<div class="wt" style="left:497.0px;top:259px"></div>
<div class="b" style="left:516.0px;top:254px;width:27.8px;background:#dff5e4;box-shadow:inset 1px 1px 0 #a8e0b4,inset 0 -1px 0 #a8e0b4">
<span>m<i class="el">...</i></span>
</div>
<div class="et" style="left:542.8px;top:258px"></div>
<div class="wh" style="left:626.0px;top:262px;width:7.9px"></div>
<div class="wt" style="left:626.0px;top:259px"></div>
<div class="b" style="left:633.9px;top:254px;width:54.5px;background:#c9e6f1;box-shadow:inset 1px 1px 0 #0b9bc6,inset 0 -1px 0 #0b9bc6">
<div class="dk" style="left:28.3px;width:26.2px;background:#0b9bc6"></div>
<span>PbykF<i class="el">...</i></span>
</div>
<div class="et" style="left:687.4px;top:258px"></div>
<div class="wh" style="left:211.3px;top:279px;width:85.9px"></div>
<div class="wt" style="left:211.3px;top:276px"></div>
<div class="b" style="left:297.2px;top:271px;width:26.8px;background:#fef2cf;box-shadow:inset 1px 1px 0 #f3d36a,inset 0 -1px 0 #f3d36a">
<span>w<i class="el">...</i></span>
</div>
<div class="et" style="left:323.0px;top:275px"></div>
<div class="wh" style="left:436.3px;top:279px;width:10.2px"></div>
<div class="wt" style="left:436.3px;top:276px"></div>
<div class="b" style="left:446.5px;top:271px;width:47.1px;background:#fef2cf;box-shadow:inset 1px 1px 0 #f3d36a,inset 0 -1px 0 #f3d36a">
<div class="dk" style="left:43.6px;width:3.5px;background:#f8c91c"></div>
<span>event<i class="el">...</i></span>
</div>
<div class="et" style="left:492.6px;top:275px"></div>
<div class="b" style="left:505.0px;top:271px;width:28.3px;background:#dff5e4;box-shadow:inset 1px 1px 0 #a8e0b4,inset 0 -1px 0 #a8e0b4">
<span>3<i class="el">...</i></span>
</div>
<div class="et" style="left:532.3px;top:275px"></div>
<div class="wh" style="left:626.0px;top:279px;width:7.9px"></div>
<div class="wt" style="left:626.0px;top:276px"></div>
<div class="b" style="left:633.9px;top:271px;width:58.6px;background:#c9e6f1;box-shadow:inset 1px 1px 0 #0b9bc6,inset 0 -1px 0 #0b9bc6">
<div class="dk" style="left:27.1px;width:31.5px;background:#0b9bc6"></div>
<span>PbykFm<i class="el">...</i></span>
</div>
<div class="et" style="left:691.5px;top:275px"></div>
<div class="wh" style="left:211.3px;top:296px;width:87.7px"></div>
<div class="wt" style="left:211.3px;top:293px"></div>
<div class="b" style="left:299.0px;top:288px;width:51.4px;background:#fef2cf;box-shadow:inset 1px 1px 0 #f3d36a,inset 0 -1px 0 #f3d36a">
<div class="dk" style="left:27.1px;width:24.3px;background:#f8c91c"></div>
<span>frame<i class="el">...</i></span>
</div>
<div class="et" style="left:349.4px;top:292px"></div>
<div class="wh" style="left:436.3px;top:296px;width:9.7px"></div>
<div class="wt" style="left:436.3px;top:293px"></div>
<div class="b" style="left:446.0px;top:288px;width:14.2px;background:#dbe6fd;box-shadow:inset 1px 1px 0 #a3c0f5,inset 0 -1px 0 #a3c0f5">
</div>
<div class="et" style="left:459.2px;top:292px"></div>
<div class="wh" style="left:488.3px;top:296px;width:51.7px"></div>
<div class="wt" style="left:488.3px;top:293px"></div>
<div class="b" style="left:540.0px;top:288px;width:34.4px;background:#dff5e4;box-shadow:inset 1px 1px 0 #a8e0b4,inset 0 -1px 0 #a8e0b4">
<span>col<i class="el">...</i></span>
</div>
<div class="et" style="left:573.4px;top:292px"></div>
<div class="wh" style="left:626.0px;top:296px;width:7.9px"></div>
<div class="wt" style="left:626.0px;top:293px"></div>
<div class="b" style="left:633.9px;top:288px;width:57.6px;background:#c9e6f1;box-shadow:inset 1px 1px 0 #0b9bc6,inset 0 -1px 0 #0b9bc6">
<div class="dk" style="left:28.1px;width:29.5px;background:#0b9bc6"></div>
<span>PbykF<i class="el">...</i></span>
</div>
<div class="et" style="left:690.5px;top:292px"></div>
<div class="wh" style="left:211.3px;top:313px;width:87.7px"></div>
<div class="wt" style="left:211.3px;top:310px"></div>
<div class="b" style="left:299.0px;top:305px;width:56.5px;background:#fef2cf;box-shadow:inset 1px 1px 0 #f3d36a,inset 0 -1px 0 #f3d36a">
<div class="dk" style="left:29.3px;width:27.2px;background:#f8c91c"></div>
<span>main-e<i class="el">...</i></span>
</div>
<div class="et" style="left:354.5px;top:309px"></div>
<div class="wh" style="left:437.0px;top:313px;width:8.3px"></div>
<div class="wt" style="left:437.0px;top:310px"></div>
<div class="b" style="left:445.3px;top:305px;width:28.9px;background:#dbe6fd;box-shadow:inset 1px 1px 0 #a3c0f5,inset 0 -1px 0 #a3c0f5">
<span>b <i class="el">...</i></span>
</div>
<div class="et" style="left:473.2px;top:309px"></div>
<div class="b" style="left:505.0px;top:305px;width:28.5px;background:#dff5e4;box-shadow:inset 1px 1px 0 #a8e0b4,inset 0 -1px 0 #a8e0b4">
<span>3<i class="el">...</i></span>
</div>
<div class="et" style="left:532.5px;top:309px"></div>
<div class="wh" style="left:626.0px;top:313px;width:7.9px"></div>
<div class="wt" style="left:626.0px;top:310px"></div>
<div class="b" style="left:633.9px;top:305px;width:57.6px;background:#c9e6f1;box-shadow:inset 1px 1px 0 #0b9bc6,inset 0 -1px 0 #0b9bc6">
<div class="dk" style="left:28.1px;width:29.5px;background:#0b9bc6"></div>
<span>PbykF<i class="el">...</i></span>
</div>
<div class="et" style="left:690.5px;top:309px"></div>
<div class="wh" style="left:211.3px;top:330px;width:87.7px"></div>
<div class="wt" style="left:211.3px;top:327px"></div>
<div class="b" style="left:299.0px;top:322px;width:807.0px;background:#fef2cf;box-shadow:inset 1px 1px 0 #f3d36a,inset 0 -1px 0 #f3d36a">
<div class="dk" style="left:33.8px;width:773.2px;background:#f8c91c"></div>
<span>_app-1c66d1ba9a888bcc.js (totus.pro)</span>
</div>
<div class="et" style="left:1105.0px;top:326px"></div>
<div class="wh" style="left:211.3px;top:347px;width:87.7px"></div>
<div class="wt" style="left:211.3px;top:344px"></div>
<div class="b" style="left:299.0px;top:339px;width:257.7px;background:#fef2cf;box-shadow:inset 1px 1px 0 #f3d36a,inset 0 -1px 0 #f3d36a">
<div class="dk" style="left:30.7px;width:227.0px;background:#f8c91c"></div>
<span>fec483df-db3f7b2046a0a64a.js (totus.pro)</span>
</div>
<div class="et" style="left:555.7px;top:343px"></div>
<div class="wh" style="left:626.0px;top:347px;width:7.9px"></div>
<div class="wt" style="left:626.0px;top:344px"></div>
<div class="b" style="left:633.9px;top:339px;width:61.0px;background:#c9e6f1;box-shadow:inset 1px 1px 0 #0b9bc6,inset 0 -1px 0 #0b9bc6">
<div class="dk" style="left:32.0px;width:29.0px;background:#0b9bc6"></div>
<span>PbykFm<i class="el">...</i></span>
</div>
<div class="et" style="left:693.9px;top:343px"></div>
<div class="wh" style="left:211.3px;top:364px;width:87.7px"></div>
<div class="wt" style="left:211.3px;top:361px"></div>
<div class="b" style="left:299.0px;top:356px;width:111.9px;background:#fef2cf;box-shadow:inset 1px 1px 0 #f3d36a,inset 0 -1px 0 #f3d36a">
<div class="dk" style="left:31.0px;width:80.9px;background:#f8c91c"></div>
<span>3763-ecbc1ef0a6<i class="el">...</i></span>
</div>
<div class="et" style="left:409.9px;top:360px"></div>
<div class="wh" style="left:449.4px;top:364px;width:19.6px"></div>
<div class="wt" style="left:449.4px;top:361px"></div>
<div class="b" style="left:469.0px;top:356px;width:28.0px;background:#dbe6fd;box-shadow:inset 1px 1px 0 #a3c0f5,inset 0 -1px 0 #a3c0f5">
<span>c<i class="el">...</i></span>
</div>
<div class="et" style="left:496.0px;top:360px"></div>
<div class="wh" style="left:626.0px;top:364px;width:7.9px"></div>
<div class="wt" style="left:626.0px;top:361px"></div>
<div class="b" style="left:633.9px;top:356px;width:56.4px;background:#c9e6f1;box-shadow:inset 1px 1px 0 #0b9bc6,inset 0 -1px 0 #0b9bc6">
<div class="dk" style="left:27.8px;width:28.6px;background:#0b9bc6"></div>
<span>PbykF<i class="el">...</i></span>
</div>
<div class="et" style="left:689.3px;top:360px"></div>
<div class="wh" style="left:211.3px;top:381px;width:87.7px"></div>
<div class="wt" style="left:211.3px;top:378px"></div>
<div class="b" style="left:299.0px;top:373px;width:190.8px;background:#fef2cf;box-shadow:inset 1px 1px 0 #f3d36a,inset 0 -1px 0 #f3d36a">
<div class="dk" style="left:32.0px;width:158.8px;background:#f8c91c"></div>
<span>1907-ad5c27c3b3b7d60b.js (tot<i class="el">...</i></span>
</div>
<div class="et" style="left:488.8px;top:377px"></div>
<div class="wh" style="left:626.0px;top:381px;width:7.9px"></div>
<div class="wt" style="left:626.0px;top:378px"></div>
<div class="b" style="left:633.9px;top:373px;width:59.3px;background:#c9e6f1;box-shadow:inset 1px 1px 0 #0b9bc6,inset 0 -1px 0 #0b9bc6">
<div class="dk" style="left:27.8px;width:31.5px;background:#0b9bc6"></div>
<span>PbykFm<i class="el">...</i></span>
</div>
<div class="et" style="left:692.2px;top:377px"></div>
<div class="wh" style="left:211.3px;top:398px;width:87.7px"></div>
<div class="wt" style="left:211.3px;top:395px"></div>
<div class="b" style="left:299.0px;top:390px;width:432.5px;background:#fef2cf;box-shadow:inset 1px 1px 0 #f3d36a,inset 0 -1px 0 #f3d36a">
<div class="dk" style="left:31.0px;width:401.5px;background:#f8c91c"></div>
<span>7978-897f3a152fd54de3.js (totus.pro)</span>
</div>
<div class="et" style="left:730.5px;top:394px"></div>
<div class="wh" style="left:211.3px;top:415px;width:87.7px"></div>
<div class="wt" style="left:211.3px;top:412px"></div>
<div class="b" style="left:299.0px;top:407px;width:78.7px;background:#fef2cf;box-shadow:inset 1px 1px 0 #f3d36a,inset 0 -1px 0 #f3d36a">
<span>5011-6994<i class="el">...</i></span>
</div>
<div class="et" style="left:376.7px;top:411px"></div>
<div class="wh" style="left:451.5px;top:415px;width:24.4px"></div>
<div class="wt" style="left:451.5px;top:412px"></div>
<div class="b" style="left:475.9px;top:407px;width:28.6px;background:#fef2cf;box-shadow:inset 1px 1px 0 #f3d36a,inset 0 -1px 0 #f3d36a">
<span>3<i class="el">...</i></span>
</div>
<div class="et" style="left:503.5px;top:411px"></div>
<div class="wh" style="left:211.3px;top:432px;width:87.7px"></div>
<div class="wt" style="left:211.3px;top:429px"></div>
<div class="b" style="left:299.0px;top:424px;width:113.6px;background:#fef2cf;box-shadow:inset 1px 1px 0 #f3d36a,inset 0 -1px 0 #f3d36a">
<div class="dk" style="left:112.2px;width:1.4px;background:#f8c91c"></div>
<span>2451-9e32b55d2<i class="el">...</i></span>
</div>
<div class="et" style="left:411.6px;top:428px"></div>
<div class="wh" style="left:451.5px;top:432px;width:18.1px"></div>
<div class="wt" style="left:451.5px;top:429px"></div>
<div class="b" style="left:469.6px;top:424px;width:28.2px;background:#dff5e4;box-shadow:inset 1px 1px 0 #a8e0b4,inset 0 -1px 0 #a8e0b4">
<span>g<i class="el">...</i></span>
</div>
<div class="et" style="left:496.8px;top:428px"></div>
<div class="wh" style="left:211.3px;top:449px;width:87.7px"></div>
<div class="wt" style="left:211.3px;top:446px"></div>
<div class="b" style="left:299.0px;top:441px;width:161.6px;background:#fef2cf;box-shadow:inset 1px 1px 0 #f3d36a,inset 0 -1px 0 #f3d36a">
<div class="dk" style="left:160.6px;width:1.0px;background:#f8c91c"></div>
<span>3055-58c5470e34b2f706.j<i class="el">...</i></span>
</div>
<div class="et" style="left:459.6px;top:445px"></div>
<div class="wh" style="left:211.3px;top:466px;width:87.7px"></div>
<div class="wt" style="left:211.3px;top:463px"></div>
<div class="b" style="left:299.0px;top:458px;width:218.4px;background:#fef2cf;box-shadow:inset 1px 1px 0 #f3d36a,inset 0 -1px 0 #f3d36a">
<div class="dk" style="left:160.9px;width:57.5px;background:#f8c91c"></div>
<span>index-6b09fcdd8e2f5445.js (totus.pro)</span>
</div>
<div class="et" style="left:516.4px;top:462px"></div>
<div class="wh" style="left:211.3px;top:483px;width:87.7px"></div>
<div class="wt" style="left:211.3px;top:480px"></div>
<div class="b" style="left:299.0px;top:475px;width:163.3px;background:#fef2cf;box-shadow:inset 1px 1px 0 #f3d36a,inset 0 -1px 0 #f3d36a">
<div class="dk" style="left:161.0px;width:2.3px;background:#f8c91c"></div>
<span>_buildManifest.js (totus.pro)</span>
</div>
<div class="et" style="left:461.3px;top:479px"></div>
<div class="wh" style="left:211.3px;top:500px;width:87.7px"></div>
<div class="wt" style="left:211.3px;top:497px"></div>
<div class="b" style="left:299.0px;top:492px;width:159.8px;background:#fef2cf;box-shadow:inset 1px 1px 0 #f3d36a,inset 0 -1px 0 #f3d36a">
<span>_ssgManifest.js (totus.pro)</span>
</div>
<div class="et" style="left:457.8px;top:496px"></div>
<div class="wh" style="left:451.3px;top:517px;width:14.2px"></div>
<div class="wt" style="left:451.3px;top:514px"></div>
<div class="b" style="left:465.5px;top:509px;width:15.3px;background:#dbe6fd;box-shadow:inset 1px 1px 0 #a3c0f5,inset 0 -1px 0 #a3c0f5">
</div>
<div class="et" style="left:479.8px;top:513px"></div>
<div class="abs" style="left:541px;top:526px;width:60px;height:1px;background:#7a7a7a"></div>
<div class="abs" style="left:541px;top:532px;width:33px;height:17px;background:#dff5e4"></div>
<div class="abs" style="left:574px;top:532px;width:18px;height:17px;background:#a5e3b4"></div>
<div class="abs" style="left:592px;top:532px;width:15px;height:17px;background:#6bcf87"></div>
<div class="b" style="left:451px;top:526px;width:90px;background:#dff5e4;box-shadow:inset 1px 0 0 #7fd494,inset 0 -1px 0 #2d3b31"><span>category1.webp</span></div>
<div class="b" style="left:451px;top:543px;width:90px;height:10px;background:#dff5e4"><span>category2.webp</span></div>
<div class="abs" style="left:0;top:552px;width:1149px;height:1px;background:#4a4a4a"></div>
<div class="abs" style="left:0;top:553px;width:1149px;height:6px;background:#2c2d30"></div>
<div class="abs" style="left:0;top:559px;width:1149px;height:1px;background:#4a4a4a"></div>
<div class="abs" style="left:0;top:560px;width:1149px;height:2px;background:#1e1e1e"></div>
<div class="abs" style="left:767px;top:555px;width:2px;height:2px;background:#eee"></div>
<div class="abs" style="left:771px;top:555px;width:2px;height:2px;background:#eee"></div>
<div class="abs" style="left:775px;top:555px;width:2px;height:2px;background:#eee"></div>
<div class="abs" style="left:95px;top:562px;width:1052px;height:16px;background:#fff"></div>
<div class="abs" style="left:159px;top:562px;width:1px;height:16px;background:#f0f0f0"></div>
<div class="abs" style="left:239px;top:562px;width:1px;height:16px;background:#f0f0f0"></div>
<div class="abs" style="left:319px;top:562px;width:1px;height:16px;background:#f0f0f0"></div>
<div class="abs" style="left:399px;top:562px;width:1px;height:16px;background:#f0f0f0"></div>
<div class="abs" style="left:479px;top:562px;width:1px;height:16px;background:#f0f0f0"></div>
<div class="abs" style="left:559px;top:562px;width:1px;height:16px;background:#f0f0f0"></div>
<div class="abs" style="left:639px;top:562px;width:1px;height:16px;background:#f0f0f0"></div>
<div class="abs" style="left:719px;top:562px;width:1px;height:16px;background:#f0f0f0"></div>
<div class="abs" style="left:799px;top:562px;width:1px;height:16px;background:#f0f0f0"></div>
<div class="abs" style="left:879px;top:562px;width:1px;height:16px;background:#f0f0f0"></div>
<div class="abs" style="left:959px;top:562px;width:1px;height:16px;background:#f0f0f0"></div>
<div class="abs" style="left:1039px;top:562px;width:1px;height:16px;background:#f0f0f0"></div>
<div class="abs" style="left:1119px;top:562px;width:1px;height:16px;background:#f0f0f0"></div>
<div class="abs" style="left:625px;top:562px;width:1px;height:16px;background:#999"></div>
<div class="abs" style="left:672px;top:562px;width:50px;height:16px;background:repeating-linear-gradient(90deg,#9eab9d 0 1px,#e2f6da 1px 2px)"></div>
<div class="abs" style="left:722px;top:562px;width:1px;height:16px;background:#999"></div>
<div class="abs" style="left:1147px;top:562px;width:2px;height:16px;background:#999"></div>
<div class="abs" style="left:95px;top:564px;width:530px;text-align:center;font-size:11.8px;line-height:14px;color:#333">3,320.8 ms</div>
<div class="abs" style="left:722px;top:564px;width:425px;text-align:center;font-size:11.8px;line-height:14px;color:#333">2,667.7 ms</div>
<div class="abs" style="left:7px;top:566px;width:0;height:0;border-top:4px solid transparent;border-bottom:4px solid transparent;border-left:7px solid #9a9a9a"></div>
<div class="abs" style="left:17px;top:563px;font-size:11.8px;line-height:14px;color:#e6e6e6">Frames</div>
<div class="abs" style="left:26px;top:84px;width:1px;height:494px;background:#e8e8e8"></div>
<div class="abs" style="left:1px;top:84px;width:1px;height:468px;background:#363636"></div>
<div class="abs" style="left:631px;top:84px;width:1px;height:494px;background:#3fbf5f"></div>
</div></body></html>
